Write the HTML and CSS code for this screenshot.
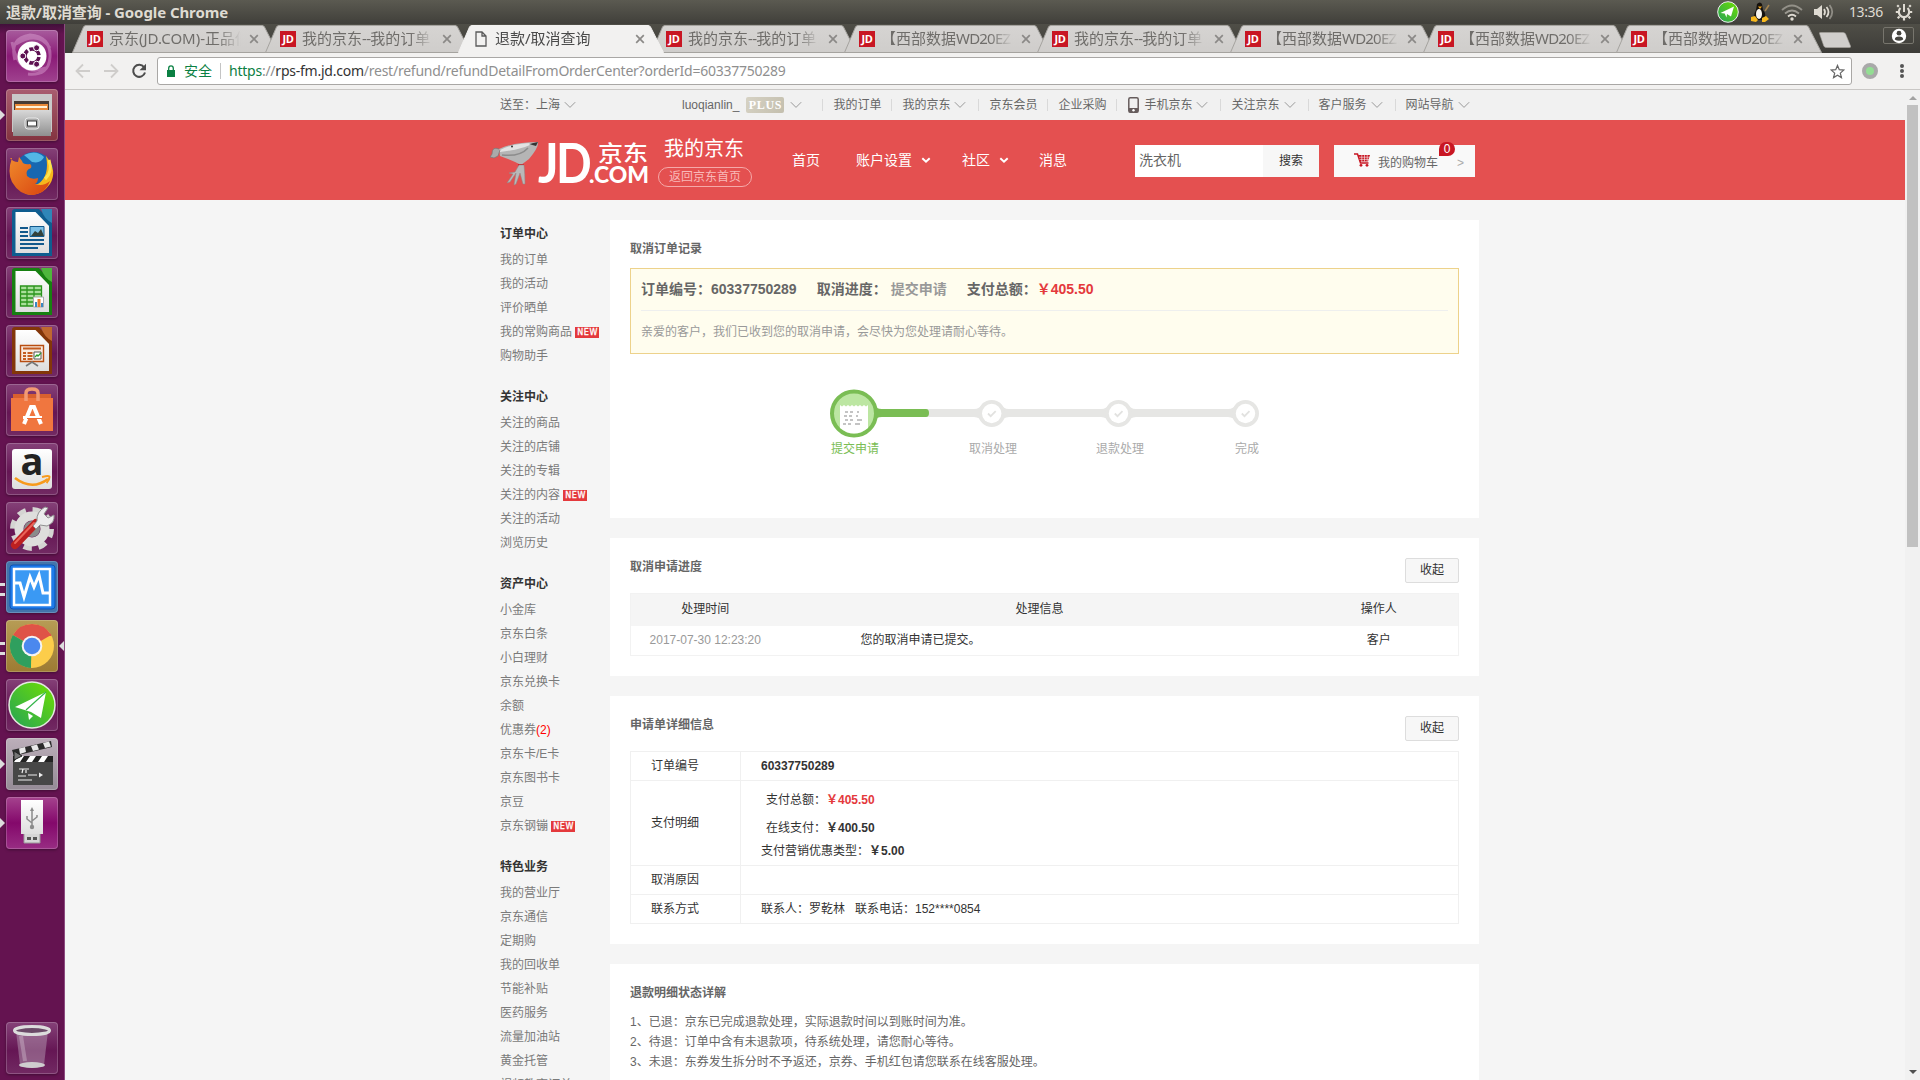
FILE: index.html
```html
<!DOCTYPE html>
<html lang="zh-CN">
<head>
<meta charset="utf-8">
<title>退款/取消查询</title>
<link rel="stylesheet" href="styles.css">
</head>
<body>
<svg class="defs" aria-hidden="true">
  <defs>
    <linearGradient id="steel" x1="0" y1="0" x2="0" y2="1"><stop offset="0" stop-color="#d8d8d8"/><stop offset="1" stop-color="#8f8f8f"/></linearGradient>
    <linearGradient id="paper" x1="0" y1="0" x2="0" y2="1"><stop offset="0" stop-color="#fff"/><stop offset="1" stop-color="#dedede"/></linearGradient>
    <linearGradient id="leaf" x1="1" y1="0" x2="0" y2="1"><stop offset="0" stop-color="#70e000"/><stop offset="1" stop-color="#24a358"/></linearGradient>
    <linearGradient id="fox" x1="0" y1="0" x2="1" y2="1"><stop offset="0" stop-color="#f08a2c"/><stop offset="1" stop-color="#d8430f"/></linearGradient>
    <linearGradient id="tabShade" x1="0" y1="0" x2="0" y2="1"><stop offset="0" stop-color="#d6d4d2"/><stop offset="1" stop-color="#cfcdcb"/></linearGradient>
  </defs>
  <symbol id="chev" viewBox="0 0 12 8"><path d="M.8 1.200 6 6.400l5.200-5.200" fill="none" stroke="#999" stroke-width="1"/></symbol>
  <symbol id="chevBold" viewBox="0 0 10 7"><path d="M1.300 1.300 5 4.700l3.700-3.400" fill="none" stroke="#fff" stroke-width="2"/></symbol>
  <symbol id="tab" viewBox="0 0 206 28"><path d="M.5 27.500 11.500 2Q12.200.5 14 .5H190Q191.800.5 192.500 2L205.500 27.500Z"/></symbol>
  <symbol id="x" viewBox="0 0 10 10"><path d="M1.200 1.200l7.600 7.600M8.800 1.200 1.200 8.800" stroke="#8b8987" stroke-width="1.700"/></symbol>
</svg>

<header class="panel">
  <span class="panel-title">退款/取消查询 - Google Chrome</span>
  <div class="tray">
    <svg width="22" height="22" viewBox="0 0 22 22"><circle cx="11" cy="11" r="10.300" fill="url(#leaf)" stroke="#eee" stroke-width="1"/><path d="M3.500 12 17 5.500l-3 10-4-2.500-.5 3.500-1.800-4z" fill="#fff"/></svg>
    <svg width="20" height="20" viewBox="0 0 20 20"><path d="M7 2q3-3 5 0l1 6q3 3 2 8l-3 2H6l-2-3q0-4 2-7z" fill="#15120e"/><ellipse cx="9" cy="12" rx="3" ry="5" fill="#f6f4ee"/><path d="M8 4.500h4l-2 2.500z" fill="#f6a81c"/><path d="M1 15l4-1 3 4-2 2-5-1zM12 16l4-2 3 3-4 3h-3z" fill="#f8b91e"/><path d="M15 9l4-6" stroke="#a58450" stroke-width="1.500"/></svg>
    <svg width="22" height="18" viewBox="0 0 22 18"><g fill="none" stroke="#dfdbd2" stroke-width="1.800"><path d="M1 7Q11-2 21 7" opacity=".45"/><path d="M4 10.500q7-6 14 0" opacity=".55"/><path d="M7 13.500q4-3.500 8 0"/></g><circle cx="11" cy="16" r="1.700" fill="#dfdbd2"/></svg>
    <svg width="20" height="18" viewBox="0 0 20 18"><path d="M0 6h3l5-4v14l-5-4H0z" fill="#dfdbd2"/><g fill="none" stroke="#dfdbd2" stroke-width="1.800"><path d="M10 6q2 3 0 6"/><path d="M12.500 4q4 5 0 10"/><path d="M15.500 2q5.500 7 0 14" opacity=".45"/></g></svg>
    <span class="clock">13:36</span>
    <svg width="18" height="18" viewBox="0 0 18 18"><g fill="none" stroke="#dfdbd2"><path d="M5.500 5A5.200 5.200 0 1 0 12.500 5" stroke-width="2.200"/><path d="M9 1v8" stroke-width="2"/><path d="M3.800 3.800 2.200 2.200M14.200 3.800l1.600-1.600M3 9H.8M15 9h2.200M4.500 13.500l-1.800 1.800M13.500 13.500l1.800 1.800M9 15v2.500" stroke-width="2.200"/></g></svg>
  </div>
</header>

<div class="desktop">
<nav class="launcher">
  <div class="tile tile-dash"><svg viewBox="0 0 52 52"><path d="M9 30Q3 8 24 5Q45 7 44 27Q43 46 22 44M6 12Q12 48 40 38M44 18Q32 0 10 14" fill="none" stroke="#e6b4de" stroke-width="3" opacity=".4"/><circle cx="26" cy="26" r="14.500" fill="#fff"/><circle cx="26" cy="26" r="7" fill="none" stroke="#5e1152" stroke-width="3.600" stroke-dasharray="12.600 2" stroke-dashoffset="-1"/><g fill="#5e1152" stroke="#fff" stroke-width="1"><circle cx="16.800" cy="26" r="3"/><circle cx="30.600" cy="17.800" r="3"/><circle cx="30.600" cy="34.200" r="3"/></g></svg></div>
  <div class="tile tile-files run-one"><svg viewBox="0 0 52 52"><path d="M6 5h40v38H6z" fill="#c9c9c9"/><path d="M8 12h35v15H8z" fill="#463b35"/><path d="M9 15h33v11H9z" fill="#e98a3a"/><path d="M10 17h31v2H10z" fill="#fff2d8"/><path d="M7 21h38v26H7z" fill="url(#steel)"/><rect x="19" y="29" width="14" height="11" rx="3" fill="#aaa" stroke="#e8e8e8"/><rect x="21.500" y="32" width="9" height="5" fill="#fff" stroke="#3b3b3b"/></svg></div>
  <div class="tile"><svg viewBox="0 0 52 52"><circle cx="28" cy="23" r="19" fill="#1767b1"/><path d="M18 7q12-6 20 2-3 7-12 5z" fill="#54b7e5"/><path d="M40 8q12 15 4 28-9 13-24 10l-8-8 20-2q12-8 8-28z" fill="#f6b71c"/><path d="M6 10q-5 14 0 24 8 14 22 13 12-2 16-14-7 6-15 3 3-2 3-6-7 2-11-2-2-6 4-8 1-3-1-4-7 1-8-3l-3-4-1 5q-5 0-8-4z" fill="url(#fox)"/><path d="M43 12q4 12-4 19" stroke="#ffe34d" stroke-width="3" fill="none"/></svg></div>
  <div class="tile"><svg viewBox="0 0 52 52"><path d="M9 2h24l13 14v33H6V5q0-3 3-3z" fill="#0f5d8f"/><path d="M9.500 5h20L43 19v27H9.500z" fill="url(#paper)"/><path d="M35 2h11v14Q38 12 35 2z" fill="#2f86b8"/><g fill="#12598c"><path d="M14 20h8v2h-8zM14 24h8v2h-8zM14 28h8v2h-8zM14 32h24v2H14zM14 36h24v2H14zM14 40h18v2H14z"/></g><path d="M24 19.500h14v10H24z" fill="#7cc0e6" stroke="#12598c"/><path d="M25 29l4-5 3 2 3-4 3 7z" fill="#33413b"/></svg></div>
  <div class="tile"><svg viewBox="0 0 52 52"><path d="M9 2h24l13 14v33H6V5q0-3 3-3z" fill="#178011"/><path d="M9.500 5h20L43 19v27H9.500z" fill="url(#paper)"/><path d="M35 2h11v14Q38 12 35 2z" fill="#4eb73c"/><path d="M14.500 20h21v20h-21z" fill="#a9df9b"/><path d="M14.500 20h21v20h-21zM14.500 24h21M14.500 28h21M14.500 32h21M14.500 36h21M21 20v20M28 20v20" fill="none" stroke="#2b941d" stroke-width="1.300"/><path d="M27.500 31h10v10h-10z" fill="#fff" stroke="#aaa"/><path d="M29 36h2v5h-2zM35 37h2v4h-2z" fill="#3888c4"/><path d="M31.500 33h3v8h-3z" fill="#ed7929"/></svg></div>
  <div class="tile"><svg viewBox="0 0 52 52"><path d="M9 2h24l13 14v33H6V5q0-3 3-3z" fill="#83360a"/><path d="M9.500 5h20L43 19v27H9.500z" fill="url(#paper)"/><path d="M35 2h11v14Q38 12 35 2z" fill="#bf6830"/><path d="M14.500 20.500h23v16h-23z" fill="#f8eadf" stroke="#b84d10" stroke-width="1.400"/><path d="M17 22.500h18v2H17zM17 27h3v2h-3zM17 30h3v2h-3zM17 33h3v2h-3zM21.500 27h5v2h-5zM21.500 30h5v2h-5zM21.500 33h5v2h-5z" fill="#c45c20"/><path d="M28 27h7v7h-7z" fill="#fff" stroke="#555"/><path d="m29 32 2-2 1 1 3-3" fill="none" stroke="#2ca02c" stroke-width="1.300"/><path d="M20 41l6-4 6 4" fill="none" stroke="#777" stroke-width="1.600"/></svg></div>
  <div class="tile"><svg viewBox="0 0 52 52"><path d="M7 10h38v8H7z" fill="#d8602f"/><path d="M5 14h42v33H5z" fill="#f0763f"/><path d="M20 17V9q0-4 6-4t6 4v8" fill="none" stroke="#f29a74" stroke-width="3.500"/><path d="M18 40l7-17h3l7 17" fill="none" stroke="#fff" stroke-width="4"/><path d="M17 33.500h19" stroke="#fff" stroke-width="3"/><path d="M21 34.500h16" stroke="#ee6b34" stroke-width="1"/></svg></div>
  <div class="tile"><svg viewBox="0 0 52 52"><rect x="6" y="6" width="40" height="40" rx="3" fill="url(#paper)"/><text x="26" y="32" text-anchor="middle" class="amz">a</text><path d="M9 35q17 13 33 1" fill="none" stroke="#f79a1c" stroke-width="2.600"/><path d="M36 34q8-2 7.500 0 0 3-3 6" fill="none" stroke="#f79a1c" stroke-width="2"/></svg></div>
  <div class="tile"><svg viewBox="0 0 52 52"><circle cx="26" cy="27" r="18.500" fill="none" stroke="#d4d4d2" stroke-width="7" stroke-dasharray="8 6.530"/><circle cx="26" cy="27" r="13" fill="none" stroke="#dededc" stroke-width="9"/><circle cx="26" cy="27" r="8" fill="#8b8b8b"/><path d="M9 43 30 21" stroke="#bd2020" stroke-width="8" stroke-linecap="round"/><path d="M9 41 28 21" stroke="#ea6458" stroke-width="2" stroke-linecap="round"/><path d="M31 19q-1-9 8-14l3 1-4 6 4 4 6-3q1 8-7 11l-7-1-4 4-3-3z" fill="#ececec" stroke="#909090"/></svg></div>
  <div class="tile tile-blue run-two"><svg viewBox="0 0 52 52"><rect x="4" y="4" width="45" height="44" rx="3" fill="#1e7bea" stroke="#0c52b3"/><rect x="8" y="8" width="36" height="36" fill="#3a99f4" stroke="#fff" stroke-width="2.500"/><path d="M9 22h5l4 14 6-20 4 10 5-12 4 18h7" fill="none" stroke="#fff" stroke-width="3"/></svg></div>
  <div class="tile tile-gold run-two active"><svg viewBox="0 0 52 52"><circle cx="26" cy="26" r="22" fill="#fccd4a"/><path d="M26 26 6.900 15A22 22 0 0 1 45.100 15z" fill="#df5347"/><path d="M26 16h19.500l-1-2.500z" fill="#df5347"/><path d="M26 26 6.900 15A22 22 0 0 0 25 48z" fill="#2f9f5e"/><path d="M26 26 35 31 25 48z" fill="#fccd4a"/><circle cx="26" cy="26" r="10.300" fill="#f4f4f4"/><circle cx="26" cy="26" r="8.300" fill="#4b88ee"/></svg></div>
  <div class="tile"><svg viewBox="0 0 52 52"><circle cx="26" cy="26" r="23" fill="url(#leaf)" stroke="#e4e9e0" stroke-width="1.500"/><path d="M9 28 40 13 35 39 25 33z" fill="#fff"/><path d="M40 13 20 31" stroke="#35b54b" stroke-width="1.200"/><path d="M22 34l5 3-4 4z" fill="#fff"/></svg></div>
  <div class="tile tile-grey run-one"><svg viewBox="0 0 52 52"><path d="M7 23h40v24H7z" fill="#474747"/><path d="M7 18h40v6H7z" fill="#222"/><path d="M12 18h6l-4 6H8zM24 18h6l-4 6h-6zM36 18h6l-4 6h-6z" fill="#fff"/><path d="M6 12 45 3l1 6-38 9z" fill="#2b2b2b"/><path d="m13 10.500 6-1.400 1 5-6 2zM25 8l6-1.500 2 5-6 1.500zM37 5l6-1.500 2 5-6 1.500z" fill="#e8e8e8"/><path d="M8 13l8 5-8 4z" fill="#777" stroke="#222"/><path d="M13 31h10M17 31l-1 4M20 32v3M22 37h9M12 42h14M12 38h8" stroke="#eee" stroke-width="1.200" fill="none"/><path d="M33 34.500l4 2.500-4 2.500z" fill="#eee"/></svg></div>
  <div class="tile tile-usb run-one"><svg viewBox="0 0 52 52"><path d="M18 34h16v12H18z" fill="#d6d6d6" stroke="#999"/><path d="M15 3h22v34H15z" fill="url(#paper)"/><path d="M21 40h4v3h-4zM27 40h4v3h-4z" fill="#555"/><path d="M26 13v17M26 26l-5-4v-3M26 24l5-4v-2" fill="none" stroke="#8b8b8b" stroke-width="1.500"/><path d="M24 14l2-4 2 4z" fill="#8b8b8b"/><circle cx="26" cy="30" r="2.200" fill="#8b8b8b"/></svg></div>
  <div class="tile tile-trash"><svg viewBox="0 0 52 52"><path d="M10 9 14 43q12 6 24 0L42 9z" fill="#c9b9c9" opacity=".4"/><ellipse cx="26" cy="43" rx="13" ry="3" fill="#cfcdcf"/><ellipse cx="26" cy="8.500" rx="17.500" ry="4" fill="#6b4a68" stroke="#dcdcdc" stroke-width="3"/><path d="M15 14l4 25" stroke="#fff" opacity=".25" stroke-width="4"/></svg></div>
</nav>

<div class="chrome">
  <div class="tabstrip">
    <div class="tab"><svg class="tab-bg"><use href="#tab"/></svg><i class="fav">JD</i><span class="tab-title">京东(JD.COM)-正品低</span><svg class="tab-x"><use href="#x"/></svg></div>
    <div class="tab"><svg class="tab-bg"><use href="#tab"/></svg><i class="fav">JD</i><span class="tab-title">我的京东<b class="dash">--</b>我的订单</span><svg class="tab-x"><use href="#x"/></svg></div>
    <div class="tab current"><svg class="tab-bg"><use href="#tab"/></svg><svg class="doc" viewBox="0 0 12 16"><path d="M1 1h6l4 4v10H1zM7 1v4h4" fill="none" stroke="#5a5a5a" stroke-width="1.300"/></svg><span class="tab-title">退款/取消查询</span><svg class="tab-x"><use href="#x"/></svg></div>
    <div class="tab"><svg class="tab-bg"><use href="#tab"/></svg><i class="fav">JD</i><span class="tab-title">我的京东<b class="dash">--</b>我的订单</span><svg class="tab-x"><use href="#x"/></svg></div>
    <div class="tab"><svg class="tab-bg"><use href="#tab"/></svg><i class="fav">JD</i><span class="tab-title">【西部数据<b class="model">WD20EZ</b></span><svg class="tab-x"><use href="#x"/></svg></div>
    <div class="tab"><svg class="tab-bg"><use href="#tab"/></svg><i class="fav">JD</i><span class="tab-title">我的京东<b class="dash">--</b>我的订单</span><svg class="tab-x"><use href="#x"/></svg></div>
    <div class="tab"><svg class="tab-bg"><use href="#tab"/></svg><i class="fav">JD</i><span class="tab-title">【西部数据<b class="model">WD20EZ</b></span><svg class="tab-x"><use href="#x"/></svg></div>
    <div class="tab"><svg class="tab-bg"><use href="#tab"/></svg><i class="fav">JD</i><span class="tab-title">【西部数据<b class="model">WD20EZ</b></span><svg class="tab-x"><use href="#x"/></svg></div>
    <div class="tab"><svg class="tab-bg"><use href="#tab"/></svg><i class="fav">JD</i><span class="tab-title">【西部数据<b class="model">WD20EZ</b></span><svg class="tab-x"><use href="#x"/></svg></div>
    <svg class="newtab" viewBox="0 0 34 16"><path d="M1.500 1.500Q1 .5 2.500.5H25q2 0 2.600 1.500L32.500 14q.5 1.500-1 1.500H8.500q-2 0-2.700-1.500z" fill="#d0cecc" stroke="#a7a59f" stroke-width=".6"/></svg>
    <div class="user"><svg width="16" height="16" viewBox="0 0 16 16"><circle cx="8" cy="8" r="7.200" fill="#fff"/><circle cx="8" cy="5.200" r="2.400" fill="#45443f"/><path d="M3.800 11.500q0-3 4.200-3t4.200 3q-4.200 2.500-8.400 0z" fill="#45443f"/></svg></div>
  </div>
  <div class="toolbar">
    <svg class="nav-i" viewBox="0 0 16 16"><path d="M15 8H2M8 1.500 1.500 8 8 14.500" fill="none" stroke="#cfcdcb" stroke-width="1.800"/></svg>
    <svg class="nav-i" viewBox="0 0 16 16"><path d="M1 8h13M8 1.500 14.500 8 8 14.500" fill="none" stroke="#cfcdcb" stroke-width="1.800"/></svg>
    <svg class="nav-i" viewBox="0 0 16 16"><path d="M13 4.200A6 6 0 1 0 14 9.500" fill="none" stroke="#4c4c4c" stroke-width="2"/><path d="M15 .8v6.500H8.500z" fill="#4c4c4c"/></svg>
    <div class="omnibox">
      <svg class="lock" viewBox="0 0 10 12"><path d="M1 5h8v7H1z" fill="#0b8043"/><path d="M2.700 5V3.200a2.300 2.300 0 0 1 4.600 0V5" fill="none" stroke="#0b8043" stroke-width="1.300"/></svg>
      <span class="secure">安全</span>
      <span class="url"><em>https</em>://<strong>rps-fm.jd.com</strong>/rest/refund/refundDetailFromOrderCenter?orderId=60337750289</span>
      <svg class="star" viewBox="0 0 16 16"><path d="m8 1.500 1.900 4.600 4.800.4-3.700 3.200 1.200 4.800L8 11.900l-4.200 2.600L5 9.700 1.300 6.500l4.800-.4z" fill="none" stroke="#666" stroke-width="1.300"/></svg>
    </div>
    <i class="ext"></i>
    <i class="dots"></i>
  </div>

  <div class="view">
  <div class="page">
    <div class="topbar"><div class="wrap">
      <span class="ship">送至：上海</span><svg class="cv"><use href="#chev"/></svg>
      <span class="account">luoqianlin_</span><span class="plus">PLUS</span><svg class="cv"><use href="#chev"/></svg>
      <ul class="links">
        <li>我的订单</li>
        <li>我的京东<svg class="cv"><use href="#chev"/></svg></li>
        <li>京东会员</li>
        <li>企业采购</li>
        <li><svg class="phone" viewBox="0 0 11 16"><rect x=".8" y=".8" width="9.400" height="14.400" rx="1.500" fill="#f1f1f1" stroke="#665c5c" stroke-width="1.500"/><path d="M1 11h9v4.300H1z" fill="#665c5c"/><circle cx="5.500" cy="13.300" r="1.200" fill="#fff"/></svg>手机京东<svg class="cv"><use href="#chev"/></svg></li>
        <li>关注京东<svg class="cv"><use href="#chev"/></svg></li>
        <li>客户服务<svg class="cv"><use href="#chev"/></svg></li>
        <li>网站导航<svg class="cv"><use href="#chev"/></svg></li>
      </ul>
    </div></div>

    <div class="banner"><div class="wrap">
      <svg class="logo" viewBox="0 0 160 50">
        <path d="M9 12Q24 5 48 5q1 5-9 17l-8 6Q24 24 10 19z" fill="#b5b5b5"/><path d="M10 13q14-7 33-7-7 6-33 9z" fill="#e2e2e2"/><path d="M12 18q18 2 26-7" stroke="#8c8c8c" fill="none" stroke-width="1.500"/><path d="M9 12Q2 9 2 17l-2 3 4 1 4-2 2-6" fill="#aaa" stroke="#777" stroke-width=".7"/><path d="M39 7l9-2-2 4z" fill="#333"/><circle cx="22" cy="9.500" r="1" fill="#333"/><path d="M28 27h6v2h-6z" fill="#d3222a"/><path d="M29 28h5q1 10 1 19h-2l-3-11-4 11-2 1 2-12-6 9-3 1 6-9-4-1 6-1z" fill="#b9b9b9" stroke="#8a8a8a" stroke-width=".5"/>
        <text class="lg-jd" transform="translate(48 46) scale(.86 1)">J</text><text class="lg-jd" transform="translate(66 46) scale(.84 1)">D</text>
        <text class="lg-cn" transform="translate(108 23.500) scale(1 .86)">京东</text>
        <text class="lg-com" x="99" y="46" textLength="60" lengthAdjust="spacingAndGlyphs">.COM</text>
      </svg>
      <div class="mine"><b>我的京东</b><a>返回京东首页</a></div>
      <ul class="menu">
        <li>首页</li>
        <li>账户设置<svg class="cb"><use href="#chevBold"/></svg></li>
        <li>社区<svg class="cb"><use href="#chevBold"/></svg></li>
        <li>消息</li>
      </ul>
      <div class="search"><span>洗衣机</span><button>搜索</button></div>
      <div class="cart"><svg width="16" height="14" viewBox="0 0 16 14"><path d="M0 1h3.500l3 9h8" fill="none" stroke="#c81623" stroke-width="1.500"/><path d="M4 2h12l-2 6.500H6z" fill="#c81623"/><path d="M5 4.200h11M5.500 6.400h10M7.800 2v6.500M10.500 2v6.500M13.200 2v6.500" stroke="#f9f9f9" stroke-width=".6"/><circle cx="7" cy="12.300" r="1.400" fill="#c81623"/><circle cx="13" cy="12.300" r="1.400" fill="#c81623"/></svg><span>我的购物车</span><i>&gt;</i><b class="count">0</b></div>
    </div></div>

    <div class="wrap body">
      <aside class="side">
        <h3>订单中心</h3>
        <ul><li>我的订单</li><li>我的活动</li><li>评价晒单</li><li>我的常购商品<b class="new">NEW</b></li><li>购物助手</li></ul>
        <h3>关注中心</h3>
        <ul><li>关注的商品</li><li>关注的店铺</li><li>关注的专辑</li><li>关注的内容<b class="new">NEW</b></li><li>关注的活动</li><li>浏览历史</li></ul>
        <h3>资产中心</h3>
        <ul><li>小金库</li><li>京东白条</li><li>小白理财</li><li>京东兑换卡</li><li>余额</li><li>优惠券<em>(2)</em></li><li>京东卡/E卡</li><li>京东图书卡</li><li>京豆</li><li>京东钢镚<b class="new">NEW</b></li></ul>
        <h3>特色业务</h3>
        <ul><li>我的营业厅</li><li>京东通信</li><li>定期购</li><li>我的回收单</li><li>节能补贴</li><li>医药服务</li><li>流量加油站</li><li>黄金托管</li><li>视频教育订单</li></ul>
      </aside>

      <main>
        <section class="card first">
          <h2>取消订单记录</h2>
          <div class="notice">
            <div class="sum"><span>订单编号：60337750289</span><span>取消进度：<i>提交申请</i></span><span>支付总额：<em>￥405.50</em></span></div>
            <p>亲爱的客户，我们已收到您的取消申请，会尽快为您处理请耐心等待。</p>
          </div>
          <div class="steps">
            <svg width="429" height="50" viewBox="0 0 429 50">
              <path d="M60 20h349v8H60z" fill="#e6e6e4"/>
              <g fill="#e6e6e4"><path d="M144 20q6 0 9-6h17q3 6 9 6v8q-6 0-9 6h-17q-3-6-9-6z"/><path d="M271 20q6 0 9-6h17q3 6 9 6v8q-6 0-9 6h-17q-3-6-9-6z"/><path d="M398 20q6 0 9-6v20q-3-6-9-6z"/><circle cx="161.700" cy="24.500" r="13.500"/><circle cx="288.500" cy="24.500" r="13.500"/><circle cx="415.500" cy="24.500" r="13.500"/></g>
              <g fill="#fff"><circle cx="161.700" cy="24.500" r="9.700"/><circle cx="288.500" cy="24.500" r="9.700"/><circle cx="415.500" cy="24.500" r="9.700"/></g>
              <path d="M158 24.500l2.700 2.700 5-5M284.800 24.500l2.700 2.700 5-5M411.800 24.500l2.700 2.700 5-5" fill="none" stroke="#e2e2e0" stroke-width="1.800"/>
              <path d="M44 16q2 4 8 4h44q3 0 3 4t-3 4H52q-6 0-8 4z" fill="#7abd54"/>
              <circle cx="24" cy="24.500" r="22" fill="#bce6a2" stroke="#7abd54" stroke-width="4"/>
              <path d="M10 16l2 1.500 2-1.500 2 1.500 2-1.500 2 1.500 2-1.500 2 1.500 2-1.500 2 1.500 2-1.500 2 1.500 2-1.500 2 1.500 2-1.500V39Q31 44.500 24 44.500T10 39z" fill="#fff"/>
              <path d="M15 23h3m2 0h3m4 0h2M14 27h3m2 0h3m4 0h2M15 31h3m2 0h3m4 0h5M13 35h3m2 0h3m4 0h5" stroke="#c4c4c4" stroke-width="2"/>
            </svg>
            <ol><li>提交申请</li><li>取消处理</li><li>退款处理</li><li>完成</li></ol>
          </div>
        </section>

        <section class="card second">
          <div class="head"><h2>取消申请进度</h2><button>收起</button></div>
          <table class="log">
            <tr><th>处理时间</th><th>处理信息</th><th>操作人</th></tr>
            <tr><td class="time">2017-07-30 12:23:20</td><td class="msg">您的取消申请已提交。</td><td>客户</td></tr>
          </table>
        </section>

        <section class="card third">
          <div class="head"><h2>申请单详细信息</h2><button>收起</button></div>
          <table class="detail">
            <tr><th>订单编号</th><td><b>60337750289</b></td></tr>
            <tr class="pay"><th>支付明细</th><td>
              <p class="in">支付总额：<em>￥405.50</em></p>
              <p class="in">在线支付：<b>￥400.50</b></p>
              <p>支付营销优惠类型：<b>￥5.00</b></p></td></tr>
            <tr><th>取消原因</th><td></td></tr>
            <tr><th>联系方式</th><td>联系人：罗乾林<span class="tel">联系电话：152****0854</span></td></tr>
          </table>
        </section>

        <section class="card fourth">
          <h2>退款明细状态详解</h2>
          <p>1、已退：京东已完成退款处理，实际退款时间以到账时间为准。</p>
          <p>2、待退：订单中含有未退款项，待系统处理，请您耐心等待。</p>
          <p>3、未退：东券发生拆分时不予返还，京券、手机红包请您联系在线客服处理。</p>
        </section>
      </main>
    </div>
  </div>
  <div class="scroll"><i class="up"></i><i class="thumb"></i><i class="down"></i></div>
  </div>
</div>
</div>
</body>
</html>
```
FILE: styles.css
```css
* { box-sizing: border-box; margin: 0; padding: 0; }
html, body { width: 1920px; height: 1080px; overflow: hidden; }
body { display: flex; flex-direction: column; background: #f5f5f5; color: #666; font: 12px/18px "Liberation Sans", "Noto Sans CJK SC", sans-serif; }
ul, ol { list-style: none; }
i, em { font-style: normal; }
svg { display: block; flex: none; }
.defs { position: absolute; width: 0; height: 0; }

/* system panel */
.panel { flex: none; height: 24px; display: flex; align-items: center; justify-content: space-between; padding: 0 7px 0 6px; background: linear-gradient(#5b5a51, #403f3a); color: #dfdbd2; font-family: "Noto Sans", "Noto Sans CJK SC", sans-serif; }
.panel-title { font-size: 15px; font-weight: 700; letter-spacing: -.08px; line-height: 24px; }
.tray { display: flex; align-items: center; gap: 11px; }
.clock { font-size: 14px; line-height: 24px; width: 37px; margin: 0 -2px 0 4px; letter-spacing: -.4px; }

.desktop { flex: 1; display: flex; min-height: 0; }

/* launcher */
.launcher { flex: none; width: 65px; padding: 6px 0 6px 6px; background: linear-gradient(#41103a, #641350 10px); border-right: 1px solid #8d4a80; display: flex; flex-direction: column; gap: 7px; }
.tile { position: relative; width: 52px; height: 52px; border-radius: 4px; background: linear-gradient(#854178, #651654 55%, #722a63); box-shadow: inset 0 0 0 1px rgba(255,255,255,.2), 0 1px 3px rgba(0,0,0,.35); }
.tile svg { width: 52px; height: 52px; }
.tile-dash { background: linear-gradient(#a85c9d, #8a1a76 50%, #a0428f); }
.tile-files { background: linear-gradient(#a95d70, #83333f); }
.tile-blue { background: #4374ab; }
.tile-gold { background: linear-gradient(#b79c55, #9d7b33); }
.tile-grey { background: linear-gradient(#bcafba, #958b96); }
.tile-usb { background: linear-gradient(#a5438e, #84086b 50%, #982d83); }
.tile-trash { margin-top: auto; }
.run-one::before { content: ""; position: absolute; left: -6px; top: 21px; border: 5px solid transparent; border-left-color: #ddd; border-right: 0; }
.run-two::before { content: ""; position: absolute; left: -6px; top: 22px; width: 5px; height: 7px; border: solid #ddd; border-width: 3px 0; }
.active::after { content: ""; position: absolute; right: -6px; top: 21px; border: 5px solid transparent; border-right-color: #ddd; border-left: 0; }
.amz { font: 700 38px "Open Sans", sans-serif; fill: #222; }

/* browser frame */
.chrome { flex: 1; display: flex; flex-direction: column; min-width: 0; }
.tabstrip { flex: none; height: 29px; display: flex; padding: 1px 6px 0 7px; background: linear-gradient(#4f4e47, #3d3c38); font-family: "Noto Sans", "Noto Sans CJK SC", sans-serif; }
.tab { position: relative; flex: none; width: 205px; margin-right: -12px; height: 28px; display: flex; align-items: center; padding-left: 15px; isolation: isolate; }
.tab-bg { position: absolute; left: 0; top: 0; width: 206px; height: 28px; z-index: -1; fill: url(#tabShade); stroke: #a5a39f; stroke-width: 1; }
.current { z-index: 2; }
.current .tab-bg { fill: #f2f1f0; stroke: #f2f1f0; }
.fav { width: 16px; height: 16px; background: #c81623; color: #fff; font: 700 11px/16px "Open Sans", sans-serif; text-align: center; letter-spacing: -.3px; }
.doc { width: 12px; height: 16px; margin: 0 2px; }
.tab-title { width: 132px; margin: 0 0 2px 6px; overflow: hidden; white-space: nowrap; font-size: 15px; line-height: 24px; color: #6f6d6a; -webkit-mask-image: linear-gradient(90deg, #000 108px, transparent 132px); }
.current .tab-title { color: #4a4a4a; }
.tab-title b { font-weight: 400; }
.tab-title .dash { letter-spacing: -.7px; }
.tab-title .model { letter-spacing: -.8px; }
.tab-x { width: 10px; height: 10px; margin-left: 8px; }
.newtab { width: 34px; height: 16px; margin: 7px 0 0 9px; }
.user { width: 31px; height: 17px; margin: 2px 0 0 auto; border: 1px solid #77756d; border-radius: 2px; display: flex; align-items: center; justify-content: center; }
.toolbar { flex: none; height: 37px; display: flex; align-items: center; padding: 0 16px 0 10px; background: #f2f1f0; border-bottom: 1px solid #c9c7c5; font-family: "Noto Sans", "Noto Sans CJK SC", sans-serif; }
.nav-i { width: 16px; height: 16px; margin-right: 12px; }
.omnibox { flex: 1; height: 28px; margin-left: -2px; display: flex; align-items: center; border: 1px solid #a9a7a5; border-radius: 3px; background: #fff; padding: 0 6px 0 8px; }
.lock { width: 10px; height: 12px; }
.secure { margin-left: 8px; padding-right: 8px; border-right: 1px solid #c4c4c4; font-size: 14px; line-height: 16px; color: #0b8043; }
.url { flex: 1; margin-left: 8px; font-size: 14px; line-height: 24px; color: #8f8f8f; white-space: nowrap; letter-spacing: -.24px; }
.url em { color: #0b8043; }
.url strong { font-weight: 400; color: #333; }
.star { width: 15px; height: 15px; }
.ext { width: 16px; height: 16px; margin: 0 22px 0 10px; border: 4px solid #a9a9a9; border-radius: 50%; background: #93de93; }
.dots { width: 4px; height: 4px; border-radius: 50%; background: #555; box-shadow: 0 -5px #555, 0 5px #555; }

/* page */
.view { flex: 1; display: flex; min-height: 0; }
.page { flex: 1; overflow: hidden; background: #f5f5f5; }
.wrap { width: 990px; margin: 0 auto; display: flex; }
.topbar { height: 30px; background: #f1f1f1; }
.topbar .wrap { align-items: center; height: 30px; padding-left: 10px; white-space: nowrap; }
.cv { width: 12px; height: 8px; margin-left: 4px; }
.account { margin-left: 106px; }
.plus { flex: none; width: 38px; height: 16px; margin: 0 2px 0 7px; border-radius: 2px; background: linear-gradient(120deg, #d6d2c4, #c4bfae); color: #fff; font: 700 12px/16px "Liberation Serif", serif; text-align: center; letter-spacing: .6px; }
.links { display: flex; flex: none; margin-left: 20px; }
.links li { display: flex; flex: none; align-items: center; padding-left: 10px; margin-right: 10px; line-height: 18px; }
.links li:last-child { margin-right: 0; }
.links li::before { content: ""; width: 1px; height: 12px; background: #d9d9d9; margin: 0 10px 0 -10px; }
.links .cv { margin-right: 2px; }
.phone { width: 11px; height: 16px; margin: 0 5px 0 1px; }

.banner { height: 80px; background: #e45050; color: #fff; }
.banner .wrap { height: 80px; }
.logo { width: 160px; height: 50px; margin-top: 17px; fill: #fff; }
.lg-jd { font: 700 56px "Lato", sans-serif; }
.lg-cn { font: 500 25px "Noto Sans CJK SC", sans-serif; }
.lg-com { font: 900 22px "Lato", sans-serif; }
.mine { width: 94px; margin-left: 8px; padding-top: 15px; }
.mine b { display: block; margin-left: 6px; font-weight: 400; font-size: 20px; line-height: 28px; white-space: nowrap; }
.mine a { display: block; height: 20px; margin-top: 4px; border: 1px solid #f5a9a9; border-radius: 10px; text-align: center; line-height: 19px; color: #f9b9b9; }
.menu { display: flex; margin-left: 40px; font-size: 14px; line-height: 80px; }
.menu li { display: flex; align-items: center; margin-right: 36px; }
.menu li:nth-child(2) { margin-right: 31px; }
.menu li:nth-child(3) { margin-right: 30px; }
.cb { width: 10px; height: 7px; margin-left: 9px; }
.search { display: flex; width: 184px; height: 32px; margin-top: 25px; margin-left: 32px; background: #fff; color: #666; }
.search span { width: 128px; padding-left: 4px; font-size: 14px; line-height: 30px; }
.search button { width: 56px; border: 0; background: #f7f7f7; font: inherit; color: #333; padding-bottom: 1px; }
.cart { position: relative; width: 141px; height: 32px; margin: 25px 0 0 15px; padding: 3px 0 0 20px; display: flex; align-items: center; background: #f9f9f9; color: #666; }
.cart span { margin-left: 8px; line-height: 32px; }
.cart svg { margin-bottom: 5px; }
.cart i { margin-left: 19px; color: #aaa; }
.count { position: absolute; left: 105px; top: -3px; width: 16px; height: 14px; border-radius: 7px 7px 7px 0; background: #c81623; color: #fff; font: 12px/14px "Liberation Sans", sans-serif; text-align: center; }

.body { height: 900px; padding-top: 20px; }
.side { width: 120px; padding-left: 10px; color: #7a7a7a; }
.side h3 { font-size: 12px; line-height: 28px; color: #333; }
.side ul { padding-bottom: 15px; }
.side li { height: 24px; line-height: 24px; display: flex; align-items: center; white-space: nowrap; }
.side em { color: #f00; }
.new { width: 24px; height: 11px; margin: 1px 0 0 3px; padding-left: 1px; background: #e4393c; color: #fff; font: 400 8px/11px "DejaVu Sans", sans-serif; letter-spacing: .6px; text-align: center; -webkit-text-stroke: .3px #fff; }
main { width: 869px; }
.card { background: #fff; margin-bottom: 20px; padding: 20px 20px 0; }
.card h2 { font-size: 12px; line-height: 18px; color: #666; }
.first { height: 298px; }
.second { height: 138px; }
.third { height: 248px; }
.fourth { height: 260px; }
.notice { height: 86px; margin-top: 10px; padding: 0 10px; border: 1px solid #edd28b; background: #fffdee; }
.sum { display: flex; gap: 20px; width: 807px; height: 42px; border-bottom: 1px solid #eeefee; font-size: 14px; font-weight: 700; line-height: 40px; color: #666; }
.sum i { margin-left: 4px; color: #999; }
.sum em { color: #e4393c; }
.notice p { color: #999; line-height: 42px; }
.steps { width: 429px; margin: 35px 0 0 200px; }
.steps ol { display: flex; margin-top: 1px; color: #aaa; padding-left: 1px; }
.steps li { width: 48px; margin-right: 79px; white-space: nowrap; }
.steps li:first-child { color: #7abd54; margin-right: 90px; }
.steps li:last-child { margin: 0 0 0 12px; width: 24px; }
.head { display: flex; justify-content: space-between; }
.head button { width: 54px; height: 25px; border: 1px solid #ddd; border-radius: 2px; background: #f7f7f7; color: #333; font: inherit; padding-bottom: 2px; }
table { width: 829px; margin-top: 10px; border-collapse: collapse; table-layout: fixed; color: #333; }
.log { border: 1px solid #f2f2f2; }
.log th { height: 32px; background: #f5f5f5; font-weight: 400; text-align: center; padding-bottom: 1px; }
.log td { height: 30px; text-align: center; }
.log th:first-child { width: 149px; }
.log th:last-child { width: 159px; }
.log .msg { text-align: left; padding-left: 81px; }
.log .time { color: #999; }
.detail th, .detail td { height: 29px; border: 1px solid #f0f0f0; text-align: left; font-weight: 400; padding: 0 0 1px 20px; line-height: 18px; }
.detail th { width: 110px; }
.detail .pay td, .detail .pay th { height: 85px; }
.detail .pay td { padding-top: 5px; padding-bottom: 0; }
.detail p { line-height: 24px; }
.detail p:last-child { margin-top: -1px; }
.detail .in { padding-left: 5px; }
.detail .in:first-child { padding-bottom: 4px; }
.detail em { color: #e4393c; font-weight: 700; }
.tel { margin-left: 10px; }
.fourth h2 { margin-bottom: 10px; }
.fourth p { line-height: 20px; }

.scroll { flex: none; width: 15px; display: flex; flex-direction: column; align-items: center; background: #f1f1f1; }
.up, .down { border: 4px solid transparent; }
.up { border-top: 0; border-bottom-color: #a3a3a3; margin: 6px 0 5px; }
.thumb { width: 11px; height: 442px; background: #c1c1c1; }
.down { border-bottom: 0; border-top-color: #505050; margin: auto 0 6px; }
```
